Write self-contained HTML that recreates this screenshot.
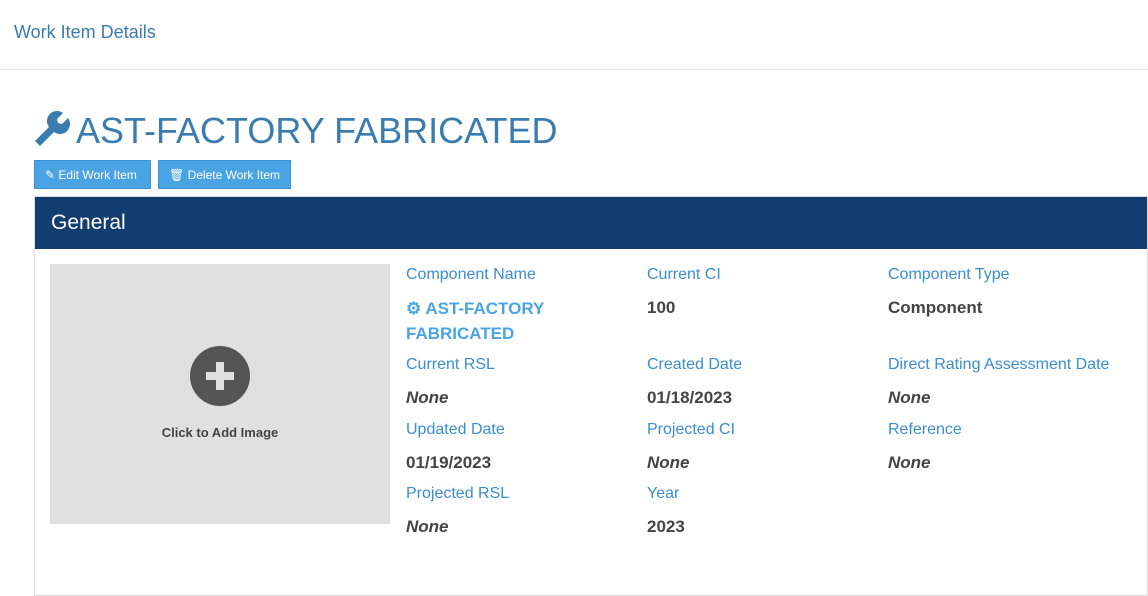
<!DOCTYPE html>
<html><head><style>
body{margin:0;width:1148px;height:570px;overflow:hidden;background:#fff;font-family:"Liberation Sans",sans-serif;}
.top{height:69px;border-bottom:1px solid #e5e5e5;}
.top a{position:absolute;left:14px;top:22px;font-size:18px;color:#3a7cb0;}
h1{position:absolute;left:76px;top:110px;margin:0;font-size:36px;font-weight:normal;color:#3a7cb0;}
.btn{position:absolute;top:160px;height:29px;background:#4aa4e4;border:1px solid #3a94d4;color:#fff;font-size:12px;line-height:28px;box-sizing:border-box;padding-left:10px;}
.panel{position:absolute;left:34px;top:196px;width:1114px;height:400px;border:1px solid #ddd;box-sizing:border-box;}
.ph{height:52px;background:#123d70;color:#fff;font-size:21px;line-height:52px;padding-left:16px;}
.img{position:absolute;left:15px;top:67px;width:340px;height:260px;background:#e0e0e0;}
.circ{position:absolute;left:140px;top:82px;width:60px;height:60px;border-radius:50%;background:#555;}
.circ:before{content:"";position:absolute;left:26px;top:16px;width:8px;height:28px;background:#e0e0e0;}
.circ:after{content:"";position:absolute;left:16px;top:26px;width:28px;height:8px;background:#e0e0e0;}
.cap{position:absolute;top:161px;width:100%;text-align:center;font-size:13px;font-weight:bold;color:#444;}
.l{position:absolute;font-size:16px;color:#3a8ed0;}
.v{position:absolute;font-size:17px;font-weight:bold;color:#444;}
.i{font-style:italic;}
</style></head><body>
<div class="top"><a>Work Item Details</a></div>
<svg style="position:absolute;left:33px;top:110px" width="38" height="38" viewBox="0 0 38 38"><path d="M2 31 L16 17 A10 10 0 0 1 30 3 L24 9 L25 13 L29 14 L35 8 A10 10 0 0 1 21 22 L7 36 Z" fill="#3a7cb0"/></svg>
<h1>AST-FACTORY FABRICATED</h1>
<div class="btn" style="left:34px;width:117px">&#9998; Edit Work Item</div>
<div class="btn" style="left:158px;width:133px">&#128465; Delete Work Item</div>
<div class="panel"><div class="ph">General</div>
<div class="img"><div class="circ"></div><div class="cap">Click to Add Image</div></div>
<div class="l" style="left:371px;top:69px">Component Name</div>
<div class="v" style="left:371px;top:99px;color:#4aa4e4;line-height:25px">&#9881; AST-FACTORY<br>FABRICATED</div>
<div class="l" style="left:612px;top:69px">Current CI</div>
<div class="v" style="left:612px;top:101px">100</div>
<div class="l" style="left:853px;top:69px">Component Type</div>
<div class="v" style="left:853px;top:101px">Component</div>
<div class="l" style="left:371px;top:159px">Current RSL</div>
<div class="v i" style="left:371px;top:191px">None</div>
<div class="l" style="left:612px;top:159px">Created Date</div>
<div class="v" style="left:612px;top:191px">01/18/2023</div>
<div class="l" style="left:853px;top:159px">Direct Rating Assessment Date</div>
<div class="v i" style="left:853px;top:191px">None</div>
<div class="l" style="left:371px;top:224px">Updated Date</div>
<div class="v" style="left:371px;top:256px">01/19/2023</div>
<div class="l" style="left:612px;top:224px">Projected CI</div>
<div class="v i" style="left:612px;top:256px">None</div>
<div class="l" style="left:853px;top:224px">Reference</div>
<div class="v i" style="left:853px;top:256px">None</div>
<div class="l" style="left:371px;top:288px">Projected RSL</div>
<div class="v i" style="left:371px;top:320px">None</div>
<div class="l" style="left:612px;top:288px">Year</div>
<div class="v" style="left:612px;top:320px">2023</div>
</div>
</body></html>
